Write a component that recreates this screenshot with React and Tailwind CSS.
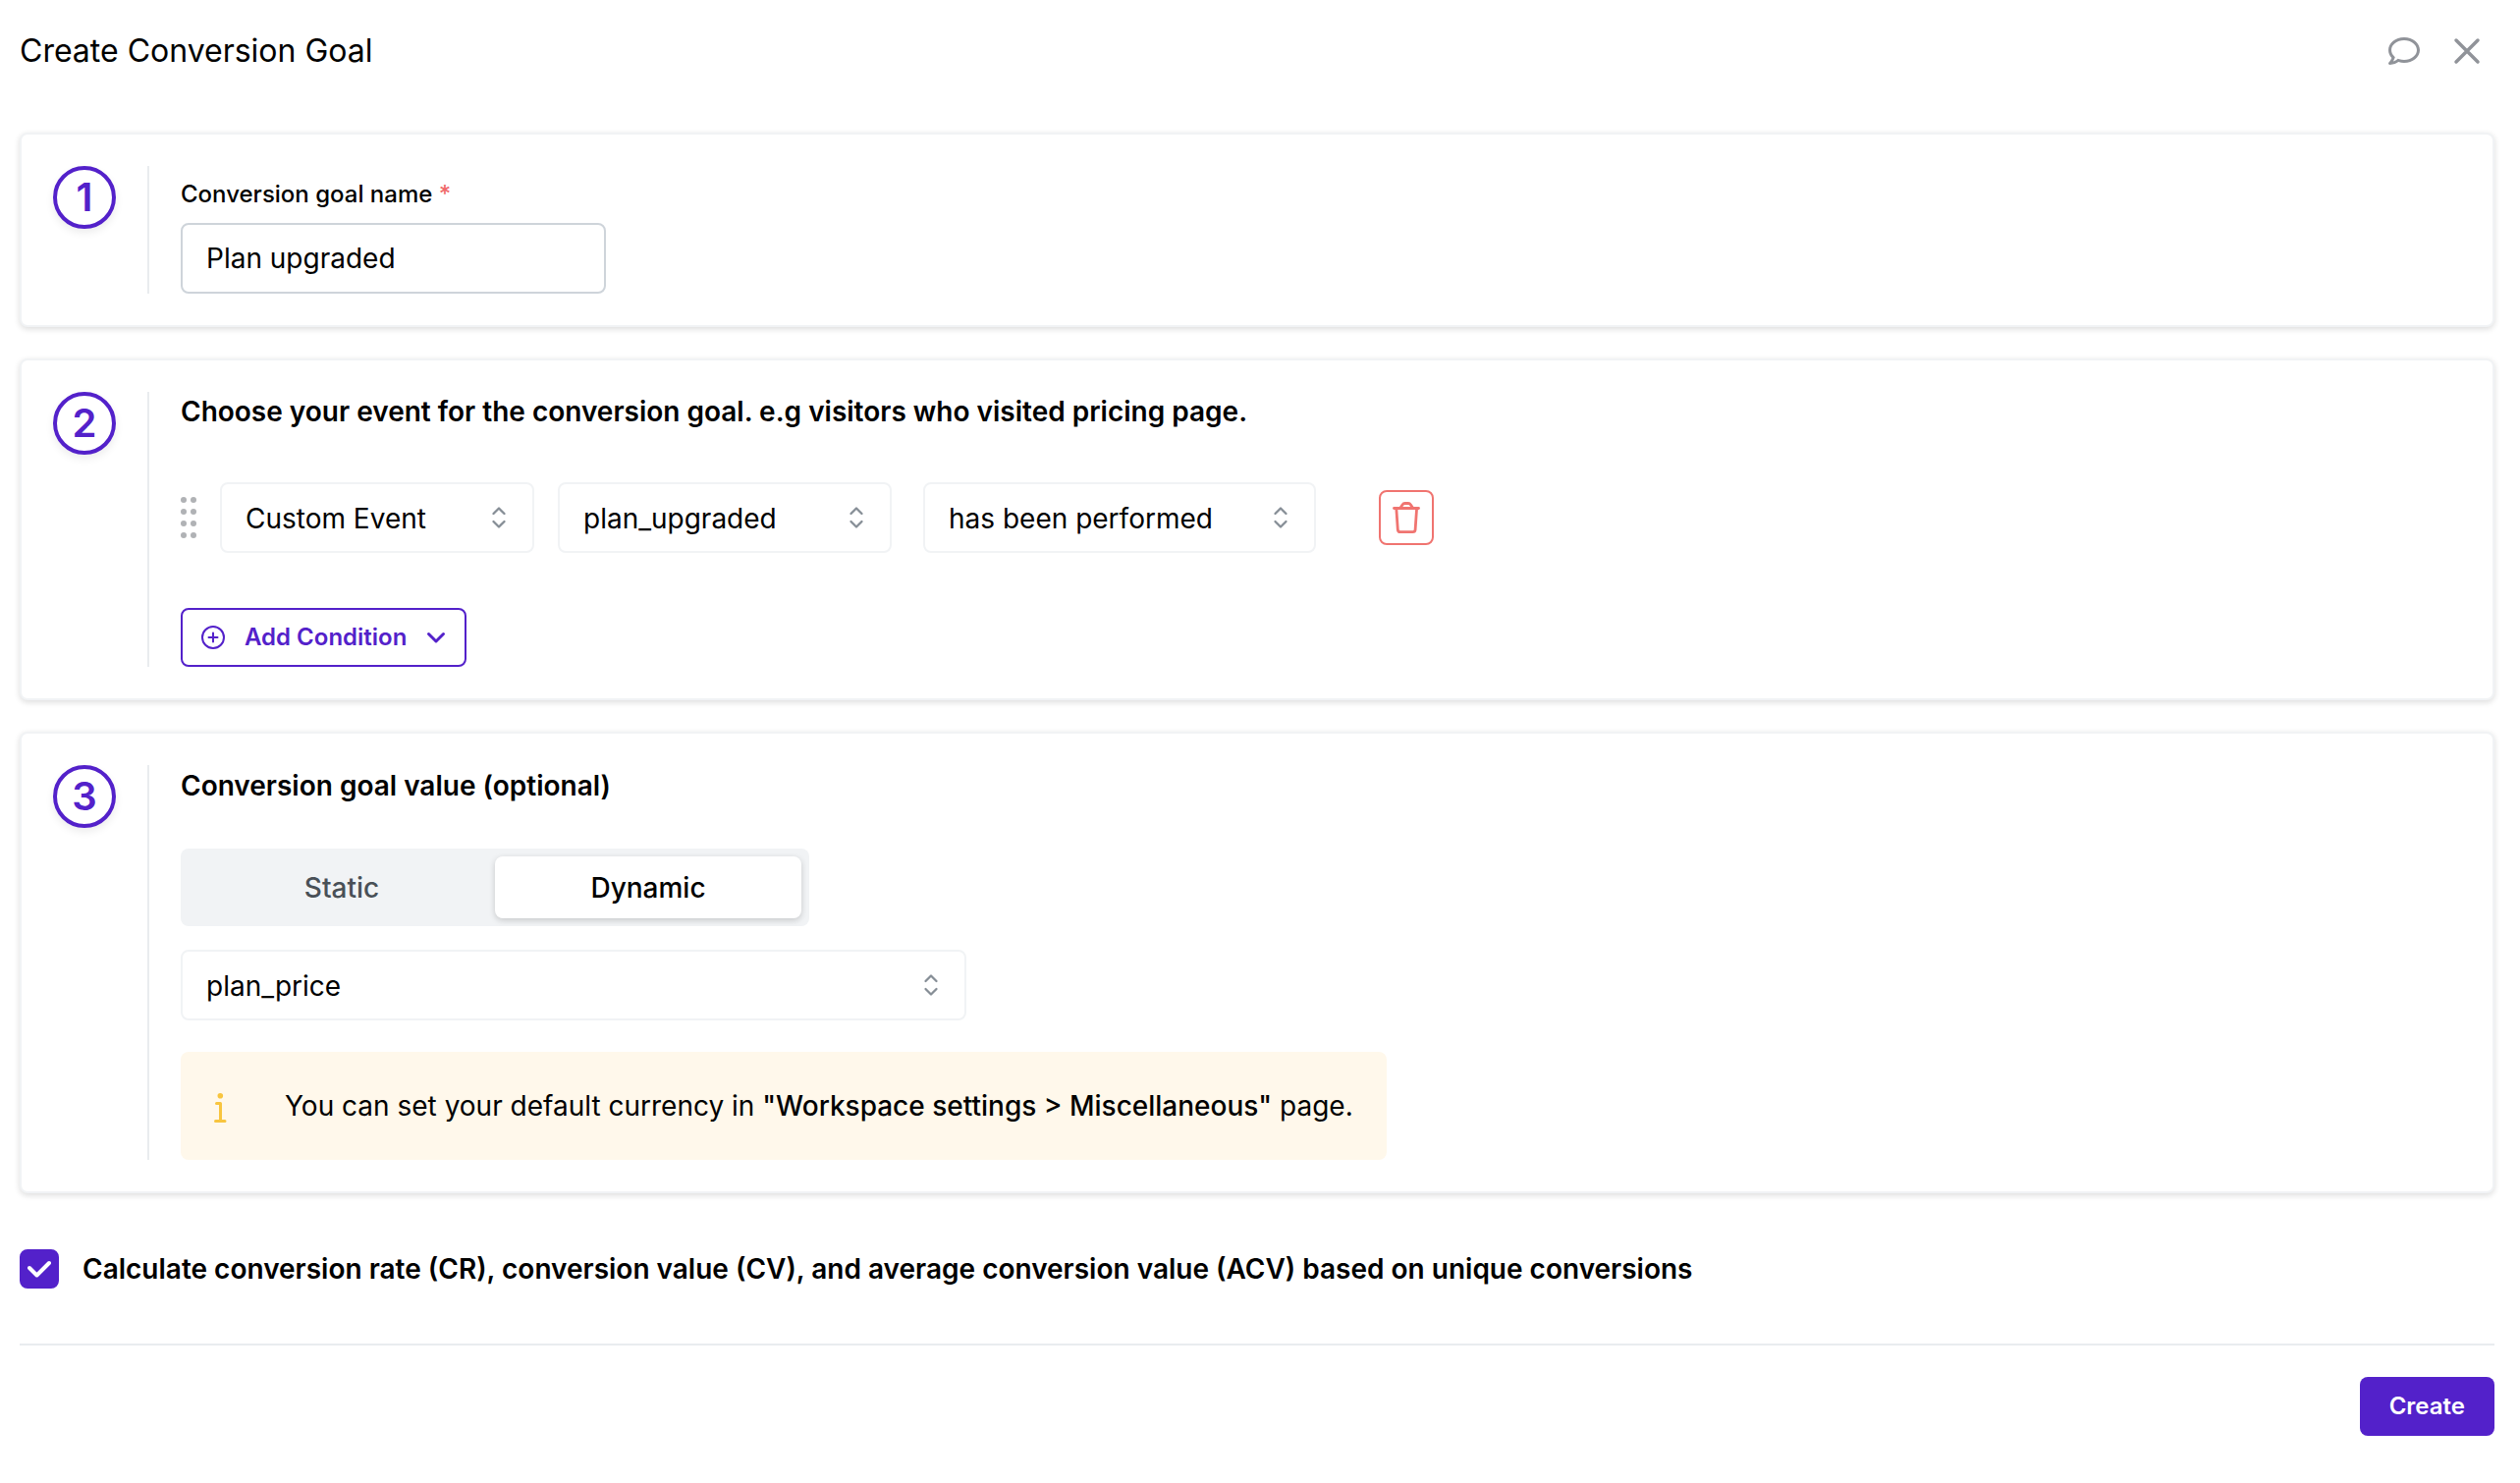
import { useState } from "react";
import { FaRegComment } from "react-icons/fa";

const EVENT_TYPES = ["Custom Event", "Page Visit"];
const EVENT_NAMES = ["plan_upgraded", "plan_cancelled"];
const OPERATORS = ["has been performed", "has not been performed"];
const PROPERTIES = ["plan_price", "plan_name"];

function StepCard({ number, children }) {
  return (
    <section className="flex gap-8 rounded-lg border-2 border-[#f1f3f5] bg-white p-8 shadow-[0_2px_6px_rgba(0,0,0,0.14)]">
      <div className="flex size-16 shrink-0 items-center justify-center rounded-full border-4 border-[#5321ca] text-[40px] leading-none font-semibold text-[#5321ca] shadow-[0_4px_8px_rgba(0,0,0,0.08)]">
        {number}
      </div>
      <div className="min-w-0 flex-1 border-l-2 border-[#e9ecef] pl-8">{children}</div>
    </section>
  );
}

function SelectField({ label, options, className }) {
  return (
    <div className={`relative ${className}`}>
      <select
        aria-label={label}
        className="h-[72px] w-full appearance-none rounded-lg border-2 border-[#f1f3f5] bg-white pt-0.5 pr-16 pl-6 text-[28px] text-black"
      >
        {options.map((option) => (
          <option key={option}>{option}</option>
        ))}
      </select>
      <svg
        viewBox="0 0 24 24"
        className="pointer-events-none absolute top-6 right-6 size-6 fill-none stroke-[#868e96] stroke-[2.3]"
        strokeLinecap="round"
        strokeLinejoin="round"
      >
        <path d="M6.500 8l5.500-5.500 5.500 5.500M6.500 16l5.500 5.500 5.500-5.500" />
      </svg>
    </div>
  );
}

function DragHandle() {
  return (
    <button type="button" aria-label="Reorder condition" className="mr-6 text-[#b0b2b5]">
      <svg viewBox="0 0 16 42" className="h-[42px] w-4 fill-current">
        {[3, 15, 27, 39].map((y) => (
          <g key={y}>
            <circle cx="3" cy={y} r="3" />
            <circle cx="13" cy={y} r="3" />
          </g>
        ))}
      </svg>
    </button>
  );
}

function TrashIcon() {
  return (
    <svg
      viewBox="0 0 32 32"
      className="size-8 fill-none stroke-current stroke-[2.8]"
      strokeLinecap="round"
      strokeLinejoin="round"
    >
      <path d="M3.500 6.500h25" />
      <path d="M5.800 6.500l1.500 21.800q.2 2.300 2.500 2.300h12.800q2.300 0 2.500-2.300L26.600 6.500" />
      <path d="M10 6l2-3q1-1.500 2.500-1.500h3.500q1.500 0 2.500 1.500l2 3" />
    </svg>
  );
}

export default function App() {
  const [name, setName] = useState("Plan upgraded");
  const [valueType, setValueType] = useState("Dynamic");
  const [unique, setUnique] = useState(true);

  return (
    <main className="min-h-screen bg-white pt-6 pr-[26px] pb-12 pl-5 font-['Inter',sans-serif] text-black">
      {/* Header */}
      <header className="flex items-center justify-between pr-3">
        <h1 className="text-[32px] leading-14">Create Conversion Goal</h1>
        <div className="flex items-center gap-8 text-[#909399]">
          <button type="button" aria-label="Comments">
            <FaRegComment className="size-8" />
          </button>
          <button type="button" aria-label="Close">
            <svg viewBox="0 0 32 32" className="size-8 fill-none stroke-current stroke-[3.5]" strokeLinecap="round">
              <path d="M5 5l22 22M27 5L5 27" />
            </svg>
          </button>
        </div>
      </header>

      <form onSubmit={(e) => e.preventDefault()}>
        <div className="mt-[55px] flex flex-col gap-8">
          {/* Goal name */}
          <StepCard number={1}>
            <label htmlFor="goal-name" className="block py-2.5 text-2xl leading-[38px] font-medium">
              Conversion goal name <span className="text-[#f06a6a]">*</span>
            </label>
            <input
              id="goal-name"
              type="text"
              value={name}
              onChange={(e) => setName(e.target.value)}
              className="h-[72px] w-[433px] rounded-lg border-2 border-[#ced4da] px-6 text-[28px]"
            />
          </StepCard>

          {/* Event conditions */}
          <StepCard number={2}>
            <h2 className="text-[28px] leading-10 font-semibold">
              Choose your event for the conversion goal. e.g visitors who visited pricing page.
            </h2>
            <div className="mt-[52px] flex items-center">
              <DragHandle />
              <SelectField label="Event type" options={EVENT_TYPES} className="w-80" />
              <SelectField label="Event name" options={EVENT_NAMES} className="ml-6 w-[340px]" />
              <SelectField label="Operator" options={OPERATORS} className="ml-8 w-[400px]" />
              <button
                type="button"
                aria-label="Delete condition"
                className="ml-16 flex size-14 items-center justify-center rounded-lg border-2 border-[#f07470] text-[#f07470]"
              >
                <TrashIcon />
              </button>
            </div>
            <button
              type="button"
              className="mt-14 flex h-[60px] items-center rounded-lg border-2 border-[#5321ca] px-[19px] text-2xl font-semibold text-[#5321ca]"
            >
              <svg viewBox="0 0 24 24" className="mr-5 size-6 fill-none stroke-current stroke-2" strokeLinecap="round">
                <circle cx="12" cy="12" r="11" />
                <path d="M12 7.500v9M7.500 12h9" />
              </svg>
              Add Condition
              <svg viewBox="0 0 20 20" className="ml-5 size-5 fill-none stroke-current stroke-3" strokeLinecap="round" strokeLinejoin="round">
                <path d="M2.500 6.500l7.500 7.500 7.500-7.500" />
              </svg>
            </button>
          </StepCard>

          {/* Goal value */}
          <StepCard number={3}>
            <h2 className="text-[28px] leading-[42px] font-semibold">Conversion goal value (optional)</h2>
            <div className="mt-[43px] flex h-[79px] w-[640px] rounded-lg bg-[#f1f3f5] p-2">
              {["Static", "Dynamic"].map((type) => (
                <button
                  key={type}
                  type="button"
                  aria-pressed={valueType === type}
                  onClick={() => setValueType(type)}
                  className={`flex-1 rounded-lg text-[28px] font-medium ${
                    valueType === type
                      ? "bg-white text-black shadow-[0_2px_6px_rgba(0,0,0,0.18)]"
                      : "text-[#495057]"
                  }`}
                >
                  {type}
                </button>
              ))}
            </div>
            <SelectField label="Value property" options={PROPERTIES} className="mt-6 w-[800px]" />
            <div className="mt-8 flex h-[110px] w-fit items-center rounded-lg bg-[#fff8eb] pr-[34px] pl-8">
              <svg
                viewBox="0 0 16 36"
                className="mr-[58px] h-9 w-4 fill-none stroke-[#f8c53f] stroke-3"
                strokeLinecap="round"
                strokeLinejoin="round"
              >
                <circle cx="8.300" cy="7.700" r="2.800" className="fill-[#f8c53f] stroke-none" />
                <path d="M4.500 15.500h4v18M3.500 33.500h9.500" />
              </svg>
              <p className="text-[28px]">
                You can set your default currency in{" "}
                <span className="font-medium">"Workspace settings &gt; Miscellaneous"</span> page.
              </p>
            </div>
          </StepCard>
        </div>

        <div className="mt-14 flex items-center gap-6">
          <span className="relative flex size-10">
            <input
              id="unique-conversions"
              type="checkbox"
              checked={unique}
              onChange={(e) => setUnique(e.target.checked)}
              className="size-10 appearance-none rounded-lg border-2 border-[#ced4da] checked:border-[#5321ca] checked:bg-[#5321ca]"
            />
            {unique && (
              <svg
                viewBox="0 0 24 24"
                className="pointer-events-none absolute top-2 left-2 size-6 fill-none stroke-white stroke-4"
                strokeLinecap="round"
                strokeLinejoin="round"
              >
                <path d="M2 11l7.500 7.500L22 6" />
              </svg>
            )}
          </span>
          <label htmlFor="unique-conversions" className="text-[28px] leading-[42px] font-semibold">
            Calculate conversion rate (CR), conversion value (CV), and average conversion value (ACV) based on unique
            conversions
          </label>
        </div>

        {/* Footer */}
        <footer className="mt-[55px] flex justify-end border-t-2 border-[#e9ecef] pt-8">
          <button type="submit" className="h-[60px] rounded-lg bg-[#5321ca] px-[30px] text-2xl font-semibold text-white">
            Create
          </button>
        </footer>
      </form>
    </main>
  );
}
